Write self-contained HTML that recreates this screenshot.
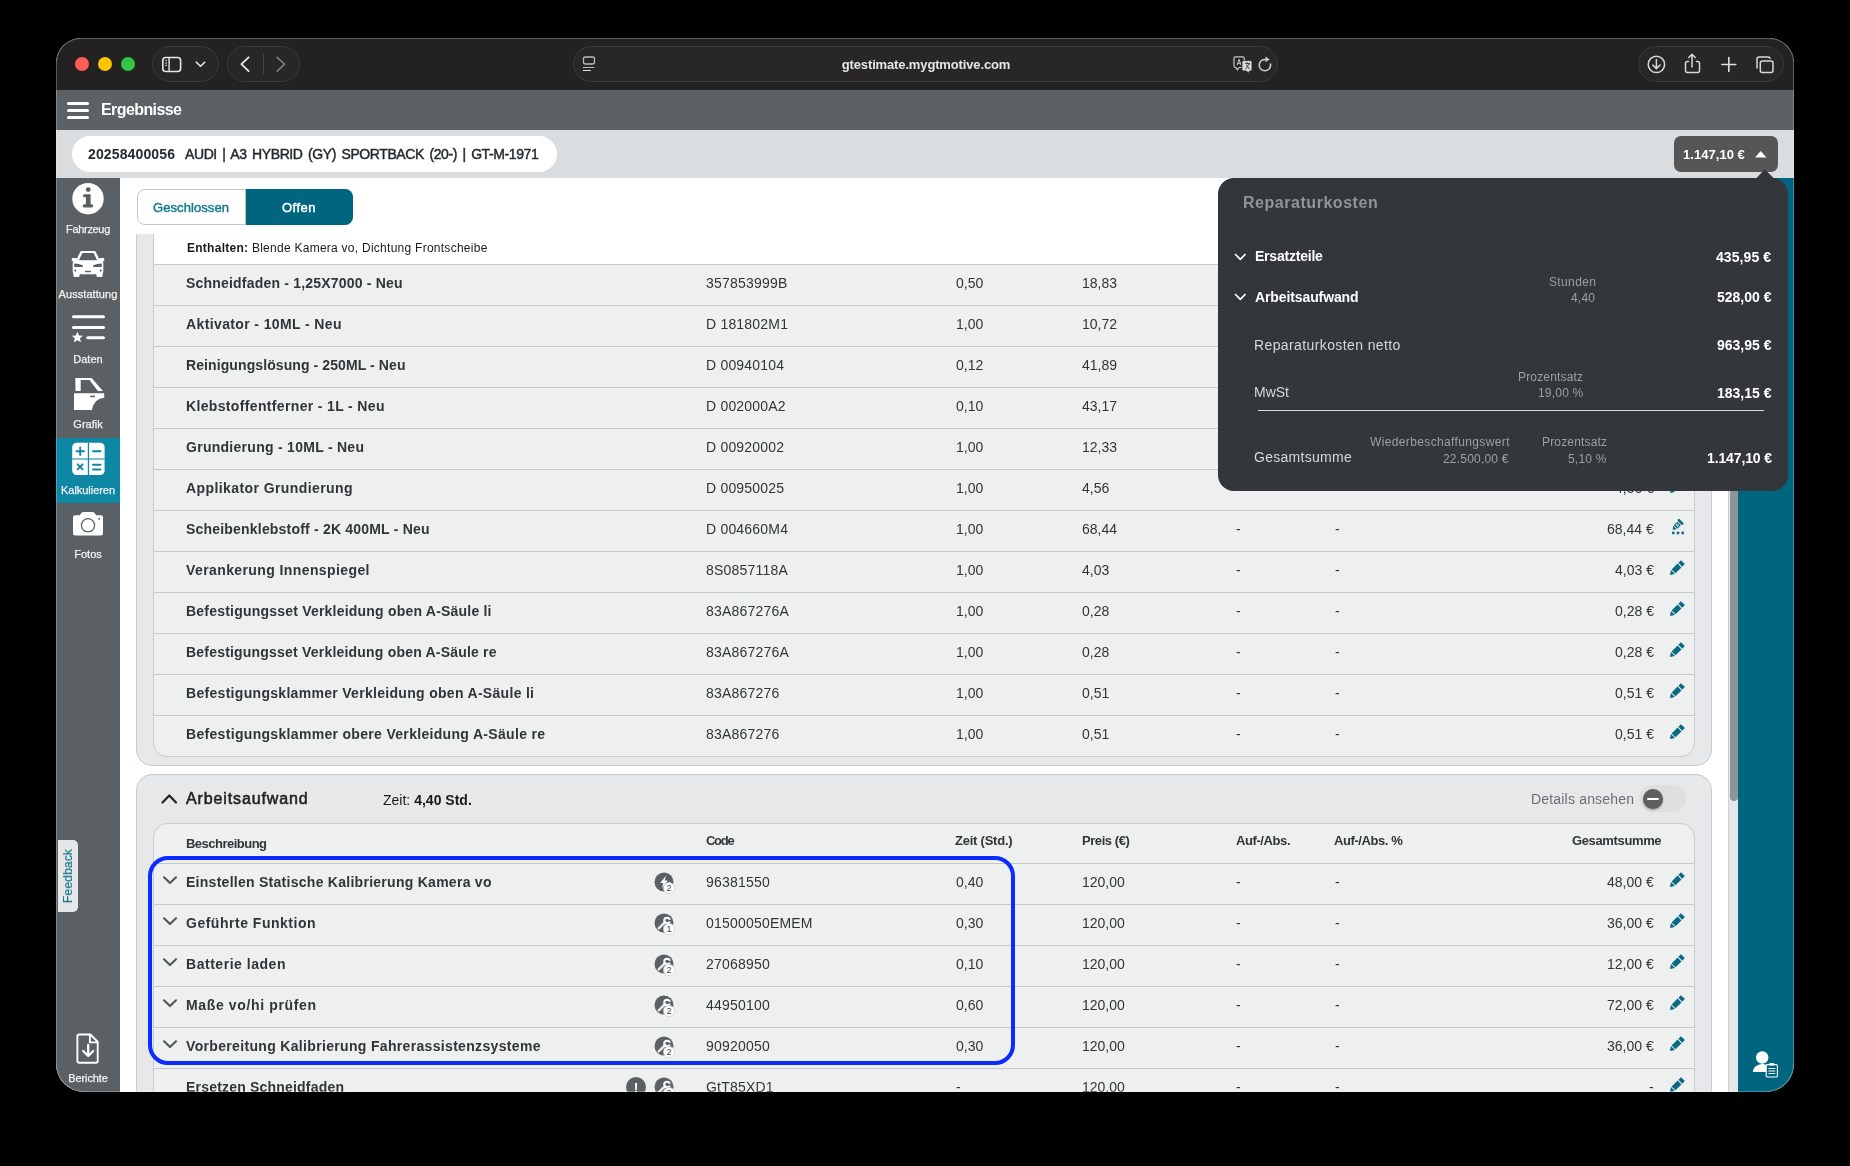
<!DOCTYPE html><html><head><meta charset="utf-8"><style>
html,body{margin:0;padding:0;}
body{width:1850px;height:1166px;background:#000;position:relative;overflow:hidden;font-family:"Liberation Sans", sans-serif;}
.t{position:absolute;line-height:1;white-space:pre;will-change:transform;}
.r{position:absolute;box-sizing:border-box;}
.win{position:absolute;left:56px;top:38px;width:1738px;height:1054px;border-radius:25px 25px 28px 28px;overflow:hidden;background:#fff;}
.pg{position:absolute;left:-56px;top:-38px;width:1850px;height:1166px;}
svg{position:absolute;overflow:visible;}
</style></head><body>
<div class="win"><div class="pg">
<div class="r" style="left:56px;top:38px;width:1738px;height:52px;background:#232220;"></div>
<div class="r" style="left:75px;top:57px;width:14px;height:14px;background:#ff5c58;border-radius:50%;"></div>
<div class="r" style="left:98px;top:57px;width:14px;height:14px;background:#fcc403;border-radius:50%;"></div>
<div class="r" style="left:121px;top:57px;width:14px;height:14px;background:#33c748;border-radius:50%;"></div>
<div class="r" style="left:152px;top:46px;width:67px;height:36px;border:1px solid #3d3b38;border-radius:18px;background:#282725;"></div>
<div class="r" style="left:227px;top:46px;width:73px;height:36px;border:1px solid #3d3b38;border-radius:18px;background:#282725;"></div>
<div class="r" style="left:573px;top:46px;width:705px;height:36px;border:1px solid #3d3b38;border-radius:18px;background:#282725;"></div>
<div class="r" style="left:1638px;top:46px;width:146px;height:36px;border:1px solid #3d3b38;border-radius:18px;background:#282725;"></div>
<svg style="left:0;top:0" width="1850" height="100">
<rect x="162.8" y="57.5" width="17.8" height="14" rx="3" fill="none" stroke="#e8e8e8" stroke-width="1.6"/>
<line x1="169.1" y1="58" x2="169.1" y2="71" stroke="#d0d0d0" stroke-width="1.6"/>
<path d="M165.3 60.5 h1.6 M165.3 65.4 h1.6" stroke="#d8d8d8" stroke-width="1.1"/><rect x="165.3" y="62" width="1.6" height="2" fill="#9a9a9a"/>
<path d="M196.3 62.2 L200.5 66.3 L204.7 62.2" fill="none" stroke="#e8e8e8" stroke-width="1.6" stroke-linecap="round" stroke-linejoin="round"/>
<path d="M248.6 57.3 L241.4 64.2 L248.6 71.1" fill="none" stroke="#e8e8e8" stroke-width="1.8" stroke-linecap="round" stroke-linejoin="round"/>
<line x1="263.5" y1="54" x2="263.5" y2="74" stroke="#444" stroke-width="1"/>
<path d="M277.2 57.3 L284.6 64.2 L277.2 71.1" fill="none" stroke="#7a7a7a" stroke-width="1.8" stroke-linecap="round" stroke-linejoin="round"/>
<rect x="583.5" y="57" width="11" height="7" rx="1.8" fill="none" stroke="#bdbdbd" stroke-width="1.3"/>
<line x1="583" y1="67.5" x2="594.5" y2="67.5" stroke="#bdbdbd" stroke-width="1.2"/>
<line x1="583" y1="70.5" x2="591" y2="70.5" stroke="#e0e0e0" stroke-width="1.2"/>
<path d="M1235.5 56.8 h7.2 a1.5 1.5 0 0 1 1.5 1.5 v7.7 a1.5 1.5 0 0 1 -1.5 1.5 h-3.6 l-1.8 2.3 l-1.3 -2.3 h-0.5 a1.5 1.5 0 0 1 -1.5 -1.5 v-7.7 a1.5 1.5 0 0 1 1.5 -1.5z" fill="#282725" stroke="#c8c8c8" stroke-width="1.2"/>
<path d="M1237.2 65.2 L1239.1 59.3 L1241 65.2 M1237.8 63.4 h2.6" fill="none" stroke="#c8c8c8" stroke-width="1"/>
<path d="M1243.5 60.6 h7 a1.5 1.5 0 0 1 1.5 1.5 v7.3 a1.5 1.5 0 0 1 -1.5 1.5 h-1 l-1 2.3 l-2.2 -2.3 h-2.8 a1.5 1.5 0 0 1 -1.5 -1.5 v-7.3 a1.5 1.5 0 0 1 1.5 -1.5z" fill="#dadada" stroke="#282725" stroke-width="0.8"/>
<path d="M1245 63.6 h5 M1247.5 62.4 v1.2 M1245.6 69 L1249.2 64 M1246.2 65 L1249.6 69" fill="none" stroke="#3a3a3a" stroke-width="1"/>
<path d="M1270.5 64 A5.7 5.7 0 1 1 1266.4 59.6" fill="none" stroke="#cfcfcf" stroke-width="1.5" stroke-linecap="round"/>
<path d="M1265.6 56.6 L1269.6 59.4 L1265.4 62.2 Z" fill="#cfcfcf"/>
<circle cx="1656.4" cy="64.4" r="8.2" fill="none" stroke="#d8d8d8" stroke-width="1.5"/>
<path d="M1656.4 59.5 v8.8 M1652.8 65 l3.6 3.6 l3.6 -3.6" fill="none" stroke="#d8d8d8" stroke-width="1.5" stroke-linecap="round" stroke-linejoin="round"/>
<path d="M1688.5 61.5 h-1 a2 2 0 0 0 -2 2 v7 a2 2 0 0 0 2 2 h10 a2 2 0 0 0 2 -2 v-7 a2 2 0 0 0 -2 -2 h-1" fill="none" stroke="#d8d8d8" stroke-width="1.5" stroke-linecap="round"/>
<path d="M1692 67 v-12.5 M1688.8 57.5 l3.2 -3.2 l3.2 3.2" fill="none" stroke="#d8d8d8" stroke-width="1.5" stroke-linecap="round" stroke-linejoin="round"/>
<path d="M1728.8 57.5 v14 M1721.8 64.5 h14" stroke="#e0e0e0" stroke-width="1.6" stroke-linecap="round"/>
<rect x="1760.3" y="61" width="12.7" height="11.6" rx="2" fill="none" stroke="#d8d8d8" stroke-width="1.5"/>
<path d="M1757 68.5 v-9.5 a2 2 0 0 1 2 -2 h9 a2 2 0 0 1 2 2" fill="none" stroke="#d8d8d8" stroke-width="1.5"/>
</svg>
<div class="t" style="left:626px;width:600px;text-align:center;top:58.00px;font-size:13px;font-weight:bold;color:#e6e6e6;letter-spacing:-0.139px;">gtestimate.mygtmotive.com</div>
<div class="r" style="left:56px;top:90px;width:1738px;height:40px;background:#5c6165;"></div>
<div class="r" style="left:67px;top:101.5px;width:22px;height:3px;background:#fff;border-radius:1.5px;"></div>
<div class="r" style="left:67px;top:108.5px;width:22px;height:3px;background:#fff;border-radius:1.5px;"></div>
<div class="r" style="left:67px;top:115.5px;width:22px;height:3px;background:#fff;border-radius:1.5px;"></div>
<div class="t" style="left:100.5px;top:102.46px;font-size:16px;font-weight:bold;color:#fff;letter-spacing:-0.585px;">Ergebnisse</div>
<div class="r" style="left:56px;top:130px;width:1738px;height:48px;background:#d9dde0;"></div>
<div class="r" style="left:72px;top:136px;width:485px;height:36px;background:#fff;border-radius:18px;"></div>
<div class="t" style="left:88.4px;top:146.75px;font-size:14px;font-weight:bold;color:#262b30;letter-spacing:0.134px;">20258400056</div>
<div class="t" style="left:184.7px;top:146.75px;font-size:14px;font-weight:normal;color:#262b30;-webkit-text-stroke:0.45px #262b30;word-spacing:2px;letter-spacing:-0.404px;">AUDI | A3 HYBRID (GY) SPORTBACK (20-) | GT-M-1971</div>
<div class="r" style="left:1674px;top:136px;width:104px;height:36px;background:#565656;border-radius:7px;"></div>
<div class="t" style="left:1683px;top:148.00px;font-size:13px;font-weight:bold;color:#fff;letter-spacing:0.039px;">1.147,10 €</div>
<svg style="left:0;top:0" width="1850" height="200"><path d="M1755 157.5 L1760.7 151 L1766.4 157.5 Z" fill="#fff"/></svg>
<div class="r" style="left:56px;top:178px;width:64px;height:914px;background:#5b6064;"></div>
<div class="r" style="left:56px;top:438px;width:64px;height:65px;background:#0e87a5;"></div>
<div class="r" style="left:120px;top:178px;width:1618px;height:914px;background:#fff;"></div>
<div class="r" style="left:1738px;top:178px;width:56px;height:914px;background:#006680;"></div>
<div class="r" style="left:1728px;top:178px;width:10px;height:914px;background:#e4e6e8;border-left:1px solid #c9ced2;"></div>
<div class="r" style="left:1730px;top:178px;width:8px;height:623px;background:#8e949a;border-radius:0 0 4px 4px;"></div>
<div class="r" style="left:137px;top:189px;width:216px;height:36px;border:1px solid #c3cace;border-radius:8px;background:#fff;"></div>
<div class="r" style="left:245px;top:189px;width:108px;height:36px;background:#006680;border-radius:0 8px 8px 0;border-left:1px solid #b9c2c7;"></div>
<div class="t" style="left:152.8px;top:201.00px;font-size:13px;font-weight:normal;color:#167b94;-webkit-text-stroke:0.45px #167b94;letter-spacing:0.084px;">Geschlossen</div>
<div class="t" style="left:-1.5px;width:600px;text-align:center;top:201.00px;font-size:13px;font-weight:normal;color:#fff;-webkit-text-stroke:0.45px #fff;letter-spacing:0.534px;">Offen</div>
<div style="position:absolute;left:0;top:234px;width:1850px;height:858px;overflow:hidden;">
<div style="position:absolute;left:0;top:-234px;width:1850px;height:1166px;">
<div class="r" style="left:136px;top:100px;width:1576px;height:666px;background:#e6e8ea;border:1px solid #c6ccd1;border-radius:16px;"></div>
<div class="r" style="left:153px;top:120px;width:1542px;height:637px;background:#eef0ef;border:1px solid #c6ccd1;border-radius:14px;"></div>
<div class="r" style="left:154px;top:200px;width:1540px;height:64px;background:#fff;"></div>
</div></div>
<div class="t" style="left:186.5px;top:242.34px;font-size:12px;font-weight:normal;color:#1a1a1a;letter-spacing:0.262px;"><b>Enthalten:</b> Blende Kamera vo, Dichtung Frontscheibe</div>
<div class="r" style="left:154px;top:264px;width:1540px;height:1px;background:#c3c9cd;"></div>
<div class="t" style="left:186px;top:276.15px;font-size:14px;font-weight:bold;color:#30353a;letter-spacing:0.195px;">Schneidfaden - 1,25X7000 - Neu</div>
<div class="t" style="left:706px;top:276.15px;font-size:14px;font-weight:normal;color:#30353a;letter-spacing:0.2px;">357853999B</div>
<div class="t" style="left:956px;top:276.15px;font-size:14px;font-weight:normal;color:#30353a;">0,50</div>
<div class="t" style="left:1082px;top:276.15px;font-size:14px;font-weight:normal;color:#30353a;">18,83</div>
<div class="t" style="left:1236px;top:276.15px;font-size:14px;font-weight:normal;color:#30353a;">-</div>
<div class="t" style="left:1335px;top:276.15px;font-size:14px;font-weight:normal;color:#30353a;">-</div>
<div class="t" style="right:196px;text-align:right;top:276.15px;font-size:14px;font-weight:normal;color:#30353a;">9,42 €</div>
<svg style="left:1669px;top:273.5px" width="15" height="15" viewBox="0 0 15 15"><path d="M0.90 14.10 L2.00 9.11 L5.89 13.00 Z M2.63 8.48 L8.57 2.54 L12.46 6.43 L6.52 12.37 Z M9.35 1.76 L11.97 -0.86 L15.86 3.03 L13.24 5.65 Z" fill="#0b6a83"/></svg>
<div class="r" style="left:154px;top:305px;width:1540px;height:1px;background:#c3c9cd;"></div>
<div class="t" style="left:186px;top:317.15px;font-size:14px;font-weight:bold;color:#30353a;letter-spacing:0.379px;">Aktivator - 10ML - Neu</div>
<div class="t" style="left:706px;top:317.15px;font-size:14px;font-weight:normal;color:#30353a;letter-spacing:0.2px;">D 181802M1</div>
<div class="t" style="left:956px;top:317.15px;font-size:14px;font-weight:normal;color:#30353a;">1,00</div>
<div class="t" style="left:1082px;top:317.15px;font-size:14px;font-weight:normal;color:#30353a;">10,72</div>
<div class="t" style="left:1236px;top:317.15px;font-size:14px;font-weight:normal;color:#30353a;">-</div>
<div class="t" style="left:1335px;top:317.15px;font-size:14px;font-weight:normal;color:#30353a;">-</div>
<div class="t" style="right:196px;text-align:right;top:317.15px;font-size:14px;font-weight:normal;color:#30353a;">10,72 €</div>
<svg style="left:1669px;top:314.5px" width="15" height="15" viewBox="0 0 15 15"><path d="M0.90 14.10 L2.00 9.11 L5.89 13.00 Z M2.63 8.48 L8.57 2.54 L12.46 6.43 L6.52 12.37 Z M9.35 1.76 L11.97 -0.86 L15.86 3.03 L13.24 5.65 Z" fill="#0b6a83"/></svg>
<div class="r" style="left:154px;top:346px;width:1540px;height:1px;background:#c3c9cd;"></div>
<div class="t" style="left:186px;top:358.15px;font-size:14px;font-weight:bold;color:#30353a;letter-spacing:0.094px;">Reinigungslösung - 250ML - Neu</div>
<div class="t" style="left:706px;top:358.15px;font-size:14px;font-weight:normal;color:#30353a;letter-spacing:0.2px;">D 00940104</div>
<div class="t" style="left:956px;top:358.15px;font-size:14px;font-weight:normal;color:#30353a;">0,12</div>
<div class="t" style="left:1082px;top:358.15px;font-size:14px;font-weight:normal;color:#30353a;">41,89</div>
<div class="t" style="left:1236px;top:358.15px;font-size:14px;font-weight:normal;color:#30353a;">-</div>
<div class="t" style="left:1335px;top:358.15px;font-size:14px;font-weight:normal;color:#30353a;">-</div>
<div class="t" style="right:196px;text-align:right;top:358.15px;font-size:14px;font-weight:normal;color:#30353a;">5,03 €</div>
<svg style="left:1669px;top:355.5px" width="15" height="15" viewBox="0 0 15 15"><path d="M0.90 14.10 L2.00 9.11 L5.89 13.00 Z M2.63 8.48 L8.57 2.54 L12.46 6.43 L6.52 12.37 Z M9.35 1.76 L11.97 -0.86 L15.86 3.03 L13.24 5.65 Z" fill="#0b6a83"/></svg>
<div class="r" style="left:154px;top:387px;width:1540px;height:1px;background:#c3c9cd;"></div>
<div class="t" style="left:186px;top:399.15px;font-size:14px;font-weight:bold;color:#30353a;letter-spacing:0.348px;">Klebstoffentferner - 1L - Neu</div>
<div class="t" style="left:706px;top:399.15px;font-size:14px;font-weight:normal;color:#30353a;letter-spacing:0.2px;">D 002000A2</div>
<div class="t" style="left:956px;top:399.15px;font-size:14px;font-weight:normal;color:#30353a;">0,10</div>
<div class="t" style="left:1082px;top:399.15px;font-size:14px;font-weight:normal;color:#30353a;">43,17</div>
<div class="t" style="left:1236px;top:399.15px;font-size:14px;font-weight:normal;color:#30353a;">-</div>
<div class="t" style="left:1335px;top:399.15px;font-size:14px;font-weight:normal;color:#30353a;">-</div>
<div class="t" style="right:196px;text-align:right;top:399.15px;font-size:14px;font-weight:normal;color:#30353a;">4,32 €</div>
<svg style="left:1669px;top:396.5px" width="15" height="15" viewBox="0 0 15 15"><path d="M0.90 14.10 L2.00 9.11 L5.89 13.00 Z M2.63 8.48 L8.57 2.54 L12.46 6.43 L6.52 12.37 Z M9.35 1.76 L11.97 -0.86 L15.86 3.03 L13.24 5.65 Z" fill="#0b6a83"/></svg>
<div class="r" style="left:154px;top:428px;width:1540px;height:1px;background:#c3c9cd;"></div>
<div class="t" style="left:186px;top:440.15px;font-size:14px;font-weight:bold;color:#30353a;letter-spacing:0.276px;">Grundierung - 10ML - Neu</div>
<div class="t" style="left:706px;top:440.15px;font-size:14px;font-weight:normal;color:#30353a;letter-spacing:0.2px;">D 00920002</div>
<div class="t" style="left:956px;top:440.15px;font-size:14px;font-weight:normal;color:#30353a;">1,00</div>
<div class="t" style="left:1082px;top:440.15px;font-size:14px;font-weight:normal;color:#30353a;">12,33</div>
<div class="t" style="left:1236px;top:440.15px;font-size:14px;font-weight:normal;color:#30353a;">-</div>
<div class="t" style="left:1335px;top:440.15px;font-size:14px;font-weight:normal;color:#30353a;">-</div>
<div class="t" style="right:196px;text-align:right;top:440.15px;font-size:14px;font-weight:normal;color:#30353a;">12,33 €</div>
<svg style="left:1669px;top:437.5px" width="15" height="15" viewBox="0 0 15 15"><path d="M0.90 14.10 L2.00 9.11 L5.89 13.00 Z M2.63 8.48 L8.57 2.54 L12.46 6.43 L6.52 12.37 Z M9.35 1.76 L11.97 -0.86 L15.86 3.03 L13.24 5.65 Z" fill="#0b6a83"/></svg>
<div class="r" style="left:154px;top:469px;width:1540px;height:1px;background:#c3c9cd;"></div>
<div class="t" style="left:186px;top:481.15px;font-size:14px;font-weight:bold;color:#30353a;letter-spacing:0.410px;">Applikator Grundierung</div>
<div class="t" style="left:706px;top:481.15px;font-size:14px;font-weight:normal;color:#30353a;letter-spacing:0.2px;">D 00950025</div>
<div class="t" style="left:956px;top:481.15px;font-size:14px;font-weight:normal;color:#30353a;">1,00</div>
<div class="t" style="left:1082px;top:481.15px;font-size:14px;font-weight:normal;color:#30353a;">4,56</div>
<div class="t" style="left:1236px;top:481.15px;font-size:14px;font-weight:normal;color:#30353a;">-</div>
<div class="t" style="left:1335px;top:481.15px;font-size:14px;font-weight:normal;color:#30353a;">-</div>
<div class="t" style="right:196px;text-align:right;top:481.15px;font-size:14px;font-weight:normal;color:#30353a;">4,56 €</div>
<svg style="left:1669px;top:478.5px" width="15" height="15" viewBox="0 0 15 15"><path d="M0.90 14.10 L2.00 9.11 L5.89 13.00 Z M2.63 8.48 L8.57 2.54 L12.46 6.43 L6.52 12.37 Z M9.35 1.76 L11.97 -0.86 L15.86 3.03 L13.24 5.65 Z" fill="#0b6a83"/></svg>
<div class="r" style="left:154px;top:510px;width:1540px;height:1px;background:#c3c9cd;"></div>
<div class="t" style="left:186px;top:522.15px;font-size:14px;font-weight:bold;color:#30353a;letter-spacing:0.196px;">Scheibenklebstoff - 2K 400ML - Neu</div>
<div class="t" style="left:706px;top:522.15px;font-size:14px;font-weight:normal;color:#30353a;letter-spacing:0.2px;">D 004660M4</div>
<div class="t" style="left:956px;top:522.15px;font-size:14px;font-weight:normal;color:#30353a;">1,00</div>
<div class="t" style="left:1082px;top:522.15px;font-size:14px;font-weight:normal;color:#30353a;">68,44</div>
<div class="t" style="left:1236px;top:522.15px;font-size:14px;font-weight:normal;color:#30353a;">-</div>
<div class="t" style="left:1335px;top:522.15px;font-size:14px;font-weight:normal;color:#30353a;">-</div>
<div class="t" style="right:196px;text-align:right;top:522.15px;font-size:14px;font-weight:normal;color:#30353a;">68,44 €</div>
<svg style="left:0;top:0" width="1850" height="600"><path d="M1672.70 529.80 L1673.16 525.73 L1676.77 529.34ZM1673.73 525.17 L1677.26 521.63 L1680.87 525.24 L1677.33 528.77ZM1675.42 525.03 L1676.16 525.77 L1677.93 524.00 L1677.19 523.26ZM1676.73 526.34 L1677.47 527.08 L1679.24 525.31 L1678.50 524.57Z" fill="#0b6a83" fill-rule="evenodd"/><path d="M1678.85 520.25 L1682.25 523.65" stroke="#0b6a83" stroke-width="2.6" stroke-linecap="round"/><circle cx="1673.3" cy="533" r="1.45" fill="#0b6a83"/><circle cx="1678" cy="533" r="1.45" fill="#0b6a83"/><circle cx="1682.7" cy="533" r="1.45" fill="#0b6a83"/></svg>
<div class="r" style="left:154px;top:551px;width:1540px;height:1px;background:#c3c9cd;"></div>
<div class="t" style="left:186px;top:563.15px;font-size:14px;font-weight:bold;color:#30353a;letter-spacing:0.401px;">Verankerung Innenspiegel</div>
<div class="t" style="left:706px;top:563.15px;font-size:14px;font-weight:normal;color:#30353a;letter-spacing:0.2px;">8S0857118A</div>
<div class="t" style="left:956px;top:563.15px;font-size:14px;font-weight:normal;color:#30353a;">1,00</div>
<div class="t" style="left:1082px;top:563.15px;font-size:14px;font-weight:normal;color:#30353a;">4,03</div>
<div class="t" style="left:1236px;top:563.15px;font-size:14px;font-weight:normal;color:#30353a;">-</div>
<div class="t" style="left:1335px;top:563.15px;font-size:14px;font-weight:normal;color:#30353a;">-</div>
<div class="t" style="right:196px;text-align:right;top:563.15px;font-size:14px;font-weight:normal;color:#30353a;">4,03 €</div>
<svg style="left:1669px;top:560.5px" width="15" height="15" viewBox="0 0 15 15"><path d="M0.90 14.10 L2.00 9.11 L5.89 13.00 Z M2.63 8.48 L8.57 2.54 L12.46 6.43 L6.52 12.37 Z M9.35 1.76 L11.97 -0.86 L15.86 3.03 L13.24 5.65 Z" fill="#0b6a83"/></svg>
<div class="r" style="left:154px;top:592px;width:1540px;height:1px;background:#c3c9cd;"></div>
<div class="t" style="left:186px;top:604.15px;font-size:14px;font-weight:bold;color:#30353a;letter-spacing:0.211px;">Befestigungsset Verkleidung oben A-Säule li</div>
<div class="t" style="left:706px;top:604.15px;font-size:14px;font-weight:normal;color:#30353a;letter-spacing:0.2px;">83A867276A</div>
<div class="t" style="left:956px;top:604.15px;font-size:14px;font-weight:normal;color:#30353a;">1,00</div>
<div class="t" style="left:1082px;top:604.15px;font-size:14px;font-weight:normal;color:#30353a;">0,28</div>
<div class="t" style="left:1236px;top:604.15px;font-size:14px;font-weight:normal;color:#30353a;">-</div>
<div class="t" style="left:1335px;top:604.15px;font-size:14px;font-weight:normal;color:#30353a;">-</div>
<div class="t" style="right:196px;text-align:right;top:604.15px;font-size:14px;font-weight:normal;color:#30353a;">0,28 €</div>
<svg style="left:1669px;top:601.5px" width="15" height="15" viewBox="0 0 15 15"><path d="M0.90 14.10 L2.00 9.11 L5.89 13.00 Z M2.63 8.48 L8.57 2.54 L12.46 6.43 L6.52 12.37 Z M9.35 1.76 L11.97 -0.86 L15.86 3.03 L13.24 5.65 Z" fill="#0b6a83"/></svg>
<div class="r" style="left:154px;top:633px;width:1540px;height:1px;background:#c3c9cd;"></div>
<div class="t" style="left:186px;top:645.15px;font-size:14px;font-weight:bold;color:#30353a;letter-spacing:0.2px;">Befestigungsset Verkleidung oben A-Säule re</div>
<div class="t" style="left:706px;top:645.15px;font-size:14px;font-weight:normal;color:#30353a;letter-spacing:0.2px;">83A867276A</div>
<div class="t" style="left:956px;top:645.15px;font-size:14px;font-weight:normal;color:#30353a;">1,00</div>
<div class="t" style="left:1082px;top:645.15px;font-size:14px;font-weight:normal;color:#30353a;">0,28</div>
<div class="t" style="left:1236px;top:645.15px;font-size:14px;font-weight:normal;color:#30353a;">-</div>
<div class="t" style="left:1335px;top:645.15px;font-size:14px;font-weight:normal;color:#30353a;">-</div>
<div class="t" style="right:196px;text-align:right;top:645.15px;font-size:14px;font-weight:normal;color:#30353a;">0,28 €</div>
<svg style="left:1669px;top:642.5px" width="15" height="15" viewBox="0 0 15 15"><path d="M0.90 14.10 L2.00 9.11 L5.89 13.00 Z M2.63 8.48 L8.57 2.54 L12.46 6.43 L6.52 12.37 Z M9.35 1.76 L11.97 -0.86 L15.86 3.03 L13.24 5.65 Z" fill="#0b6a83"/></svg>
<div class="r" style="left:154px;top:674px;width:1540px;height:1px;background:#c3c9cd;"></div>
<div class="t" style="left:186px;top:686.15px;font-size:14px;font-weight:bold;color:#30353a;letter-spacing:0.304px;">Befestigungsklammer Verkleidung oben A-Säule li</div>
<div class="t" style="left:706px;top:686.15px;font-size:14px;font-weight:normal;color:#30353a;letter-spacing:0.2px;">83A867276</div>
<div class="t" style="left:956px;top:686.15px;font-size:14px;font-weight:normal;color:#30353a;">1,00</div>
<div class="t" style="left:1082px;top:686.15px;font-size:14px;font-weight:normal;color:#30353a;">0,51</div>
<div class="t" style="left:1236px;top:686.15px;font-size:14px;font-weight:normal;color:#30353a;">-</div>
<div class="t" style="left:1335px;top:686.15px;font-size:14px;font-weight:normal;color:#30353a;">-</div>
<div class="t" style="right:196px;text-align:right;top:686.15px;font-size:14px;font-weight:normal;color:#30353a;">0,51 €</div>
<svg style="left:1669px;top:683.5px" width="15" height="15" viewBox="0 0 15 15"><path d="M0.90 14.10 L2.00 9.11 L5.89 13.00 Z M2.63 8.48 L8.57 2.54 L12.46 6.43 L6.52 12.37 Z M9.35 1.76 L11.97 -0.86 L15.86 3.03 L13.24 5.65 Z" fill="#0b6a83"/></svg>
<div class="r" style="left:154px;top:715px;width:1540px;height:1px;background:#c3c9cd;"></div>
<div class="t" style="left:186px;top:727.15px;font-size:14px;font-weight:bold;color:#30353a;letter-spacing:0.316px;">Befestigungsklammer obere Verkleidung A-Säule re</div>
<div class="t" style="left:706px;top:727.15px;font-size:14px;font-weight:normal;color:#30353a;letter-spacing:0.2px;">83A867276</div>
<div class="t" style="left:956px;top:727.15px;font-size:14px;font-weight:normal;color:#30353a;">1,00</div>
<div class="t" style="left:1082px;top:727.15px;font-size:14px;font-weight:normal;color:#30353a;">0,51</div>
<div class="t" style="left:1236px;top:727.15px;font-size:14px;font-weight:normal;color:#30353a;">-</div>
<div class="t" style="left:1335px;top:727.15px;font-size:14px;font-weight:normal;color:#30353a;">-</div>
<div class="t" style="right:196px;text-align:right;top:727.15px;font-size:14px;font-weight:normal;color:#30353a;">0,51 €</div>
<svg style="left:1669px;top:724.5px" width="15" height="15" viewBox="0 0 15 15"><path d="M0.90 14.10 L2.00 9.11 L5.89 13.00 Z M2.63 8.48 L8.57 2.54 L12.46 6.43 L6.52 12.37 Z M9.35 1.76 L11.97 -0.86 L15.86 3.03 L13.24 5.65 Z" fill="#0b6a83"/></svg>
<div class="r" style="left:136px;top:774px;width:1576px;height:400px;background:#e6e8ea;border:1px solid #c6ccd1;border-radius:16px;"></div>
<div class="r" style="left:153px;top:823px;width:1542px;height:400px;background:#eef0ef;border:1px solid #c6ccd1;border-radius:14px;"></div>
<svg style="left:0;top:0" width="200" height="900"><path d="M162.5 802.5 L169.3 795.5 L176 802.5" fill="none" stroke="#222" stroke-width="2.2" stroke-linecap="round" stroke-linejoin="round"/></svg>
<div class="t" style="left:185.5px;top:791.16px;font-size:16px;font-weight:normal;color:#1f1f1f;-webkit-text-stroke:0.55px #1f1f1f;letter-spacing:0.877px;">Arbeitsaufwand</div>
<div class="t" style="left:383.3px;top:792.95px;font-size:14px;font-weight:normal;color:#1a1a1a;letter-spacing:0.006px;">Zeit: <b>4,40 Std.</b></div>
<div class="t" style="right:215.79999999999995px;text-align:right;top:791.85px;font-size:14px;font-weight:normal;color:#6b6f73;letter-spacing:0.185px;margin-right:-0.185px;">Details ansehen</div>
<div class="r" style="left:1639px;top:785px;width:47px;height:27px;background:#dedfe0;border-radius:14px;"></div>
<div class="r" style="left:1643px;top:789px;width:20px;height:20px;background:#5e5e5e;border-radius:50%;box-shadow:0 1px 2px rgba(0,0,0,0.35);"></div>
<div class="r" style="left:1647px;top:797.5px;width:12px;height:2.5px;background:#fff;border-radius:1px;"></div>
<div class="t" style="left:186.4px;top:836.90px;font-size:13px;font-weight:bold;color:#30353a;letter-spacing:-0.517px;">Beschreibung</div>
<div class="t" style="left:706.3px;top:834.00px;font-size:13px;font-weight:bold;color:#30353a;letter-spacing:-1.267px;">Code</div>
<div class="t" style="left:955.1px;top:834.00px;font-size:13px;font-weight:bold;color:#30353a;letter-spacing:-0.234px;">Zeit (Std.)</div>
<div class="t" style="left:1082px;top:834.00px;font-size:13px;font-weight:bold;color:#30353a;letter-spacing:-0.439px;">Preis (€)</div>
<div class="t" style="left:1235.7px;top:834.00px;font-size:13px;font-weight:bold;color:#30353a;letter-spacing:-0.410px;">Auf-/Abs.</div>
<div class="t" style="left:1334px;top:834.00px;font-size:13px;font-weight:bold;color:#30353a;letter-spacing:-0.425px;">Auf-/Abs. %</div>
<div class="t" style="right:188.70000000000005px;text-align:right;top:834.20px;font-size:13px;font-weight:bold;color:#30353a;letter-spacing:-0.362px;margin-right:0.362px;">Gesamtsumme</div>
<div class="r" style="left:154px;top:863px;width:1540px;height:1px;background:#c3c9cd;"></div>
<svg style="left:0;top:0" width="200" height="1100"><path d="M164 877.3 L170 883.1 L176 877.3" fill="none" stroke="#50565b" stroke-width="2.1" stroke-linecap="round" stroke-linejoin="round"/></svg>
<div class="t" style="left:186px;top:875.15px;font-size:14px;font-weight:bold;color:#30353a;letter-spacing:0.271px;">Einstellen Statische Kalibrierung Kamera vo</div>
<svg style="left:652px;top:870px" width="26" height="26" viewBox="-12 -12 26 26"><circle cx="0" cy="0" r="9.5" fill="#5b6064"/><path d="M2.2 -6.5 L-3.8 1 L-0.6 1 L-2.2 6 L3.8 -1.5 L0.6 -1.5 Z" fill="#fff"/><circle cx="5" cy="6" r="5.6" fill="#fff" stroke="#c9cdd0" stroke-width="0.7"/><text x="5" y="9.3" font-family="Liberation Sans" font-size="9" text-anchor="middle" fill="#444">2</text></svg>
<div class="t" style="left:706px;top:875.15px;font-size:14px;font-weight:normal;color:#30353a;letter-spacing:0.2px;">96381550</div>
<div class="t" style="left:956px;top:875.15px;font-size:14px;font-weight:normal;color:#30353a;">0,40</div>
<div class="t" style="left:1082px;top:875.15px;font-size:14px;font-weight:normal;color:#30353a;">120,00</div>
<div class="t" style="left:1236px;top:875.15px;font-size:14px;font-weight:normal;color:#30353a;">-</div>
<div class="t" style="left:1335px;top:875.15px;font-size:14px;font-weight:normal;color:#30353a;">-</div>
<div class="t" style="right:196px;text-align:right;top:875.15px;font-size:14px;font-weight:normal;color:#30353a;">48,00 €</div>
<svg style="left:1669px;top:872.5px" width="15" height="15" viewBox="0 0 15 15"><path d="M0.90 14.10 L2.00 9.11 L5.89 13.00 Z M2.63 8.48 L8.57 2.54 L12.46 6.43 L6.52 12.37 Z M9.35 1.76 L11.97 -0.86 L15.86 3.03 L13.24 5.65 Z" fill="#0b6a83"/></svg>
<div class="r" style="left:154px;top:904px;width:1540px;height:1px;background:#c3c9cd;"></div>
<svg style="left:0;top:0" width="200" height="1100"><path d="M164 918.3 L170 924.1 L176 918.3" fill="none" stroke="#50565b" stroke-width="2.1" stroke-linecap="round" stroke-linejoin="round"/></svg>
<div class="t" style="left:186px;top:916.15px;font-size:14px;font-weight:bold;color:#30353a;letter-spacing:0.511px;">Geführte Funktion</div>
<svg style="left:652px;top:911px" width="26" height="26" viewBox="-12 -12 26 26"><circle cx="0" cy="0" r="9.5" fill="#5b6064"/><path d="M-5.3 5.3 L1.2 -1.0" stroke="#e8e8e8" stroke-width="2.5" stroke-linecap="round"/><circle cx="3.0" cy="-2.5" r="2.75" fill="none" stroke="#fff" stroke-width="2.0"/><path d="M3.2 -3.5 L7 -3.0 L7 -1.4 L3.0 -1.6Z" fill="#5b6064"/><circle cx="5" cy="6" r="5.6" fill="#fff" stroke="#c9cdd0" stroke-width="0.7"/><text x="5" y="9.3" font-family="Liberation Sans" font-size="9" text-anchor="middle" fill="#444">1</text></svg>
<div class="t" style="left:706px;top:916.15px;font-size:14px;font-weight:normal;color:#30353a;letter-spacing:0.2px;">01500050EMEM</div>
<div class="t" style="left:956px;top:916.15px;font-size:14px;font-weight:normal;color:#30353a;">0,30</div>
<div class="t" style="left:1082px;top:916.15px;font-size:14px;font-weight:normal;color:#30353a;">120,00</div>
<div class="t" style="left:1236px;top:916.15px;font-size:14px;font-weight:normal;color:#30353a;">-</div>
<div class="t" style="left:1335px;top:916.15px;font-size:14px;font-weight:normal;color:#30353a;">-</div>
<div class="t" style="right:196px;text-align:right;top:916.15px;font-size:14px;font-weight:normal;color:#30353a;">36,00 €</div>
<svg style="left:1669px;top:913.5px" width="15" height="15" viewBox="0 0 15 15"><path d="M0.90 14.10 L2.00 9.11 L5.89 13.00 Z M2.63 8.48 L8.57 2.54 L12.46 6.43 L6.52 12.37 Z M9.35 1.76 L11.97 -0.86 L15.86 3.03 L13.24 5.65 Z" fill="#0b6a83"/></svg>
<div class="r" style="left:154px;top:945px;width:1540px;height:1px;background:#c3c9cd;"></div>
<svg style="left:0;top:0" width="200" height="1100"><path d="M164 959.3 L170 965.1 L176 959.3" fill="none" stroke="#50565b" stroke-width="2.1" stroke-linecap="round" stroke-linejoin="round"/></svg>
<div class="t" style="left:186px;top:957.15px;font-size:14px;font-weight:bold;color:#30353a;letter-spacing:0.531px;">Batterie laden</div>
<svg style="left:652px;top:952px" width="26" height="26" viewBox="-12 -12 26 26"><circle cx="0" cy="0" r="9.5" fill="#5b6064"/><path d="M-5.3 5.3 L1.2 -1.0" stroke="#e8e8e8" stroke-width="2.5" stroke-linecap="round"/><circle cx="3.0" cy="-2.5" r="2.75" fill="none" stroke="#fff" stroke-width="2.0"/><path d="M3.2 -3.5 L7 -3.0 L7 -1.4 L3.0 -1.6Z" fill="#5b6064"/><circle cx="5" cy="6" r="5.6" fill="#fff" stroke="#c9cdd0" stroke-width="0.7"/><text x="5" y="9.3" font-family="Liberation Sans" font-size="9" text-anchor="middle" fill="#444">2</text></svg>
<div class="t" style="left:706px;top:957.15px;font-size:14px;font-weight:normal;color:#30353a;letter-spacing:0.2px;">27068950</div>
<div class="t" style="left:956px;top:957.15px;font-size:14px;font-weight:normal;color:#30353a;">0,10</div>
<div class="t" style="left:1082px;top:957.15px;font-size:14px;font-weight:normal;color:#30353a;">120,00</div>
<div class="t" style="left:1236px;top:957.15px;font-size:14px;font-weight:normal;color:#30353a;">-</div>
<div class="t" style="left:1335px;top:957.15px;font-size:14px;font-weight:normal;color:#30353a;">-</div>
<div class="t" style="right:196px;text-align:right;top:957.15px;font-size:14px;font-weight:normal;color:#30353a;">12,00 €</div>
<svg style="left:1669px;top:954.5px" width="15" height="15" viewBox="0 0 15 15"><path d="M0.90 14.10 L2.00 9.11 L5.89 13.00 Z M2.63 8.48 L8.57 2.54 L12.46 6.43 L6.52 12.37 Z M9.35 1.76 L11.97 -0.86 L15.86 3.03 L13.24 5.65 Z" fill="#0b6a83"/></svg>
<div class="r" style="left:154px;top:986px;width:1540px;height:1px;background:#c3c9cd;"></div>
<svg style="left:0;top:0" width="200" height="1100"><path d="M164 1000.3 L170 1006.1 L176 1000.3" fill="none" stroke="#50565b" stroke-width="2.1" stroke-linecap="round" stroke-linejoin="round"/></svg>
<div class="t" style="left:186px;top:998.15px;font-size:14px;font-weight:bold;color:#30353a;letter-spacing:0.638px;">Maße vo/hi prüfen</div>
<svg style="left:652px;top:993px" width="26" height="26" viewBox="-12 -12 26 26"><circle cx="0" cy="0" r="9.5" fill="#5b6064"/><path d="M-5.3 5.3 L1.2 -1.0" stroke="#e8e8e8" stroke-width="2.5" stroke-linecap="round"/><circle cx="3.0" cy="-2.5" r="2.75" fill="none" stroke="#fff" stroke-width="2.0"/><path d="M3.2 -3.5 L7 -3.0 L7 -1.4 L3.0 -1.6Z" fill="#5b6064"/><circle cx="5" cy="6" r="5.6" fill="#fff" stroke="#c9cdd0" stroke-width="0.7"/><text x="5" y="9.3" font-family="Liberation Sans" font-size="9" text-anchor="middle" fill="#444">2</text></svg>
<div class="t" style="left:706px;top:998.15px;font-size:14px;font-weight:normal;color:#30353a;letter-spacing:0.2px;">44950100</div>
<div class="t" style="left:956px;top:998.15px;font-size:14px;font-weight:normal;color:#30353a;">0,60</div>
<div class="t" style="left:1082px;top:998.15px;font-size:14px;font-weight:normal;color:#30353a;">120,00</div>
<div class="t" style="left:1236px;top:998.15px;font-size:14px;font-weight:normal;color:#30353a;">-</div>
<div class="t" style="left:1335px;top:998.15px;font-size:14px;font-weight:normal;color:#30353a;">-</div>
<div class="t" style="right:196px;text-align:right;top:998.15px;font-size:14px;font-weight:normal;color:#30353a;">72,00 €</div>
<svg style="left:1669px;top:995.5px" width="15" height="15" viewBox="0 0 15 15"><path d="M0.90 14.10 L2.00 9.11 L5.89 13.00 Z M2.63 8.48 L8.57 2.54 L12.46 6.43 L6.52 12.37 Z M9.35 1.76 L11.97 -0.86 L15.86 3.03 L13.24 5.65 Z" fill="#0b6a83"/></svg>
<div class="r" style="left:154px;top:1027px;width:1540px;height:1px;background:#c3c9cd;"></div>
<svg style="left:0;top:0" width="200" height="1100"><path d="M164 1041.3 L170 1047.1 L176 1041.3" fill="none" stroke="#50565b" stroke-width="2.1" stroke-linecap="round" stroke-linejoin="round"/></svg>
<div class="t" style="left:186px;top:1039.15px;font-size:14px;font-weight:bold;color:#30353a;letter-spacing:0.330px;">Vorbereitung Kalibrierung Fahrerassistenzsysteme</div>
<svg style="left:652px;top:1034px" width="26" height="26" viewBox="-12 -12 26 26"><circle cx="0" cy="0" r="9.5" fill="#5b6064"/><path d="M-5.3 5.3 L1.2 -1.0" stroke="#e8e8e8" stroke-width="2.5" stroke-linecap="round"/><circle cx="3.0" cy="-2.5" r="2.75" fill="none" stroke="#fff" stroke-width="2.0"/><path d="M3.2 -3.5 L7 -3.0 L7 -1.4 L3.0 -1.6Z" fill="#5b6064"/><circle cx="5" cy="6" r="5.6" fill="#fff" stroke="#c9cdd0" stroke-width="0.7"/><text x="5" y="9.3" font-family="Liberation Sans" font-size="9" text-anchor="middle" fill="#444">2</text></svg>
<div class="t" style="left:706px;top:1039.15px;font-size:14px;font-weight:normal;color:#30353a;letter-spacing:0.2px;">90920050</div>
<div class="t" style="left:956px;top:1039.15px;font-size:14px;font-weight:normal;color:#30353a;">0,30</div>
<div class="t" style="left:1082px;top:1039.15px;font-size:14px;font-weight:normal;color:#30353a;">120,00</div>
<div class="t" style="left:1236px;top:1039.15px;font-size:14px;font-weight:normal;color:#30353a;">-</div>
<div class="t" style="left:1335px;top:1039.15px;font-size:14px;font-weight:normal;color:#30353a;">-</div>
<div class="t" style="right:196px;text-align:right;top:1039.15px;font-size:14px;font-weight:normal;color:#30353a;">36,00 €</div>
<svg style="left:1669px;top:1036.5px" width="15" height="15" viewBox="0 0 15 15"><path d="M0.90 14.10 L2.00 9.11 L5.89 13.00 Z M2.63 8.48 L8.57 2.54 L12.46 6.43 L6.52 12.37 Z M9.35 1.76 L11.97 -0.86 L15.86 3.03 L13.24 5.65 Z" fill="#0b6a83"/></svg>
<div class="r" style="left:154px;top:1068px;width:1540px;height:1px;background:#c3c9cd;"></div>
<div class="t" style="left:186px;top:1080.15px;font-size:14px;font-weight:bold;color:#30353a;letter-spacing:0.198px;">Ersetzen Schneidfaden</div>
<svg style="left:652px;top:1075px" width="26" height="26" viewBox="-12 -12 26 26"><circle cx="0" cy="0" r="9.5" fill="#5b6064"/><path d="M-5.3 5.3 L1.2 -1.0" stroke="#e8e8e8" stroke-width="2.5" stroke-linecap="round"/><circle cx="3.0" cy="-2.5" r="2.75" fill="none" stroke="#fff" stroke-width="2.0"/><path d="M3.2 -3.5 L7 -3.0 L7 -1.4 L3.0 -1.6Z" fill="#5b6064"/><circle cx="5" cy="6" r="5.6" fill="#fff" stroke="#c9cdd0" stroke-width="0.7"/><text x="5" y="9.3" font-family="Liberation Sans" font-size="9" text-anchor="middle" fill="#444">2</text></svg>
<div class="r" style="left:626px;top:1077px;width:20px;height:20px;background:#5b6064;border-radius:50%;"></div>
<div class="t" style="left:336px;width:600px;text-align:center;top:1081.15px;font-size:14px;font-weight:bold;color:#fff;">!</div>
<div class="t" style="left:706px;top:1080.15px;font-size:14px;font-weight:normal;color:#30353a;letter-spacing:0.2px;">GtT85XD1</div>
<div class="t" style="left:956px;top:1080.15px;font-size:14px;font-weight:normal;color:#30353a;">-</div>
<div class="t" style="left:1082px;top:1080.15px;font-size:14px;font-weight:normal;color:#30353a;">120,00</div>
<div class="t" style="left:1236px;top:1080.15px;font-size:14px;font-weight:normal;color:#30353a;">-</div>
<div class="t" style="left:1335px;top:1080.15px;font-size:14px;font-weight:normal;color:#30353a;">-</div>
<div class="t" style="right:196px;text-align:right;top:1080.15px;font-size:14px;font-weight:normal;color:#30353a;">-</div>
<svg style="left:1669px;top:1077.5px" width="15" height="15" viewBox="0 0 15 15"><path d="M0.90 14.10 L2.00 9.11 L5.89 13.00 Z M2.63 8.48 L8.57 2.54 L12.46 6.43 L6.52 12.37 Z M9.35 1.76 L11.97 -0.86 L15.86 3.03 L13.24 5.65 Z" fill="#0b6a83"/></svg>
<div class="r" style="left:148px;top:856px;width:867px;height:209px;border:4px solid #0a2cff;border-radius:20px;"></div>
<svg style="left:0;top:0" width="130" height="1100">
<circle cx="88" cy="198.7" r="15.7" fill="#fff"/>
<circle cx="88.2" cy="189.6" r="2.4" fill="#5b6064"/>
<path d="M84.6 194.2 h6 v10.1 h1 a1.55 1.55 0 0 1 0 3.1 h-7.4 a1.55 1.55 0 0 1 0 -3.1 h1.7 v-7 h-1.3 a1.55 1.55 0 0 1 0 -3.1z" fill="#5b6064"/>
<path d="M81.6 251 h12.8 a1.6 1.6 0 0 1 1.45 0.95 l4.3 9 h-24.3 l4.3 -9 a1.6 1.6 0 0 1 1.45 -0.95z" fill="#fff"/>
<path d="M82.4 253.1 h11.2 l3.7 7.6 h-18.6 z" fill="#5b6064"/>
<rect x="71.6" y="258" width="5.2" height="3.2" rx="1.4" fill="#fff"/>
<rect x="99.2" y="258" width="5.2" height="3.2" rx="1.4" fill="#fff"/>
<rect x="72.7" y="260.3" width="30.6" height="13.9" rx="2.6" fill="#fff"/>
<rect x="73.4" y="271" width="6.2" height="6" rx="1.6" fill="#fff"/>
<rect x="96.4" y="271" width="6.2" height="6" rx="1.6" fill="#fff"/>
<path d="M74.2 263.6 q4.8 0 8.6 1.6 v1.7 h-8.6 z M101.8 263.6 q-4.8 0 -8.6 1.6 v1.7 h8.6 z" fill="#5b6064"/>
<circle cx="75.3" cy="270.6" r="1.05" fill="#5b6064"/><circle cx="100.7" cy="270.6" r="1.05" fill="#5b6064"/>
<rect x="84.8" y="270.8" width="6.4" height="1.5" rx="0.75" fill="#5b6064"/>
<rect x="72" y="315.2" width="33" height="3.1" rx="1.55" fill="#fff"/>
<rect x="72" y="325.9" width="33" height="3.1" rx="1.55" fill="#fff"/>
<rect x="86.2" y="336.2" width="18.8" height="3.1" rx="1.55" fill="#fff"/>
<path d="M77.4 331.8 l1.65 3.6 l3.9 0.35 l-2.95 2.6 l0.9 3.85 l-3.5 -2.05 l-3.5 2.05 l0.9 -3.85 l-2.95 -2.6 l3.9 -0.35 z" fill="#fff"/>
<path d="M75.3 378 h16.3 l11.3 13 h-5 l-8.4 -10.9 h-8.8 v10.9 h-5.2 z" fill="#fff"/>
<path d="M74 393.2 h30.2 v4.6 q-10 0.6 -12.4 12.2 h-17.8 z" fill="#fff"/>
<rect x="90.2" y="395.6" width="4.6" height="1.6" fill="#5b6064"/>
<rect x="72.2" y="442.8" width="32.4" height="32.2" rx="4.5" fill="#fff"/>
<rect x="87.8" y="442.8" width="1.3" height="32.2" fill="#0e87a5"/>
<rect x="72.2" y="458.2" width="32.4" height="1.6" fill="#0e87a5" opacity="0.65"/>
<path d="M80.2 447.5 v7.5 M76.5 451.2 h7.5" stroke="#0e87a5" stroke-width="1.9" stroke-linecap="round"/>
<path d="M93 451.2 h7.5" stroke="#0e87a5" stroke-width="1.9" stroke-linecap="round"/>
<path d="M77.6 464.3 l5 5 M82.6 464.3 l-5 5" stroke="#0e87a5" stroke-width="1.9" stroke-linecap="round"/>
<path d="M93 464.8 h7.5 M93 469.5 h7.5" stroke="#0e87a5" stroke-width="1.9" stroke-linecap="round"/>
<path d="M75 515.3 h4.8 l1.6 -2.3 q0.6 -1 1.8 -1 h9.6 q1.2 0 1.8 1 l1.6 2.3 h4.8 a2 2 0 0 1 2 2 v16.3 a2 2 0 0 1 -2 2 h-26 a2 2 0 0 1 -2 -2 v-16.3 a2 2 0 0 1 2 -2z" fill="#fff"/>
<circle cx="88" cy="525.3" r="6.6" fill="none" stroke="#5b6064" stroke-width="1.3"/>
<circle cx="99.2" cy="519" r="0.9" fill="#5b6064"/>
<path d="M79.2 1034.5 h11.3 l7.2 7.4 v19 a1.8 1.8 0 0 1 -1.8 1.8 h-16.7 a1.8 1.8 0 0 1 -1.8 -1.8 v-24.6 a1.8 1.8 0 0 1 1.8 -1.8z" fill="none" stroke="#fff" stroke-width="1.9"/>
<path d="M89.9 1034.8 v7.6 h7.6" fill="none" stroke="#fff" stroke-width="1.9"/>
<path d="M88.2 1045 v10.5 M83.2 1051 l5 5 l5 -5" fill="none" stroke="#fff" stroke-width="2.3" stroke-linecap="round" stroke-linejoin="round"/>
</svg>
<div class="t" style="left:-212px;width:600px;text-align:center;top:223.99px;font-size:11px;font-weight:normal;color:#f2f2f2;-webkit-text-stroke:0.25px #f2f2f2;letter-spacing:-0.326px;">Fahrzeug</div>
<div class="t" style="left:-212px;width:600px;text-align:center;top:289.09px;font-size:11px;font-weight:normal;color:#f2f2f2;-webkit-text-stroke:0.25px #f2f2f2;letter-spacing:0.061px;">Ausstattung</div>
<div class="t" style="left:-212px;width:600px;text-align:center;top:354.29px;font-size:11px;font-weight:normal;color:#f2f2f2;-webkit-text-stroke:0.25px #f2f2f2;">Daten</div>
<div class="t" style="left:-212px;width:600px;text-align:center;top:419.49px;font-size:11px;font-weight:normal;color:#f2f2f2;-webkit-text-stroke:0.25px #f2f2f2;">Grafik</div>
<div class="t" style="left:-212px;width:600px;text-align:center;top:484.59px;font-size:11px;font-weight:normal;color:#f2f2f2;-webkit-text-stroke:0.25px #f2f2f2;letter-spacing:-0.042px;">Kalkulieren</div>
<div class="t" style="left:-212px;width:600px;text-align:center;top:549.49px;font-size:11px;font-weight:normal;color:#f2f2f2;-webkit-text-stroke:0.25px #f2f2f2;">Fotos</div>
<div class="t" style="left:-212px;width:600px;text-align:center;top:1073.09px;font-size:11px;font-weight:normal;color:#f2f2f2;-webkit-text-stroke:0.25px #f2f2f2;letter-spacing:-0.108px;">Berichte</div>
<div class="r" style="left:58px;top:840px;width:20px;height:72px;background:#e5e7e9;border-radius:0 5px 5px 0;"></div>
<div class="t" style="left:68.3px;top:875.8px;font-size:12px;color:#17738b;transform:translate(-50%,-50%) rotate(-90deg);letter-spacing:0.2px;-webkit-text-stroke:0.2px #17738b;">Feedback</div>
<svg style="left:1740px;top:1040px" width="40" height="40" viewBox="1740 1040 40 40">
<circle cx="1762.2" cy="1057.5" r="6.2" fill="#fff"/>
<path d="M1752.9 1072 a9.3 8 0 0 1 15.7 -5.7 v5.7 z" fill="#fff"/>
<rect x="1766.2" y="1064.6" width="11.2" height="12.4" rx="1.3" fill="#006680" stroke="#fff" stroke-width="1.1" opacity="1"/>
<rect x="1769.3" y="1062.9" width="5" height="2.6" rx="0.8" fill="#fff"/>
<path d="M1768.4 1068.5 h6.8 M1768.4 1071 h6.8 M1768.4 1073.5 h6.8" stroke="#fff" stroke-width="1"/>
</svg>
<svg style="left:0;top:0" width="1850" height="200"><path d="M1756 178.5 L1764.8 169.3 L1774 178.5 Z" fill="#33363a"/></svg>
<div class="r" style="left:1218px;top:178px;width:570px;height:313px;background:#33363a;border-radius:16px;"></div>
<div class="t" style="left:1243px;top:194.96px;font-size:16px;font-weight:bold;color:#8f959a;letter-spacing:0.539px;">Reparaturkosten</div>
<svg style="left:0;top:0" width="1850" height="500"><path d="M1235.5 254.5 L1240.3 259.3 L1245 254.5" fill="none" stroke="#fff" stroke-width="1.7" stroke-linecap="round" stroke-linejoin="round"/><path d="M1235.5 294.5 L1240.3 299.3 L1245 294.5" fill="none" stroke="#fff" stroke-width="1.7" stroke-linecap="round" stroke-linejoin="round"/></svg>
<div class="t" style="left:1254.7px;top:249.15px;font-size:14px;font-weight:bold;color:#fff;letter-spacing:-0.215px;">Ersatzteile</div>
<div class="t" style="right:78.5px;text-align:right;top:250.05px;font-size:14px;font-weight:bold;color:#fff;letter-spacing:0.086px;margin-right:-0.086px;">435,95 €</div>
<div class="t" style="left:1254.7px;top:289.65px;font-size:14px;font-weight:bold;color:#fff;letter-spacing:-0.109px;">Arbeitsaufwand</div>
<div class="t" style="right:254.4000000000001px;text-align:right;top:276.04px;font-size:12px;font-weight:normal;color:#9ba0a4;letter-spacing:0.364px;margin-right:-0.364px;">Stunden</div>
<div class="t" style="right:254.4000000000001px;text-align:right;top:291.84px;font-size:12px;font-weight:normal;color:#9ba0a4;letter-spacing:0.2px;">4,40</div>
<div class="t" style="right:78.5px;text-align:right;top:289.75px;font-size:14px;font-weight:bold;color:#fff;">528,00 €</div>
<div class="t" style="left:1253.7px;top:337.65px;font-size:14px;font-weight:normal;color:#d5d9dc;letter-spacing:0.393px;">Reparaturkosten netto</div>
<div class="t" style="right:78.5px;text-align:right;top:338.35px;font-size:14px;font-weight:bold;color:#fff;">963,95 €</div>
<div class="t" style="left:1253.5px;top:385.35px;font-size:14px;font-weight:normal;color:#d5d9dc;">MwSt</div>
<div class="t" style="right:267px;text-align:right;top:370.84px;font-size:12px;font-weight:normal;color:#9ba0a4;letter-spacing:0.163px;margin-right:-0.163px;">Prozentsatz</div>
<div class="t" style="right:267px;text-align:right;top:387.34px;font-size:12px;font-weight:normal;color:#9ba0a4;letter-spacing:0.2px;">19,00 %</div>
<div class="t" style="right:78.5px;text-align:right;top:385.65px;font-size:14px;font-weight:bold;color:#fff;">183,15 €</div>
<div class="r" style="left:1258px;top:409.5px;width:506px;height:1.3px;background:#d8dcdf;"></div>
<div class="t" style="left:1253.7px;top:450.15px;font-size:14px;font-weight:normal;color:#d5d9dc;letter-spacing:0.278px;">Gesamtsumme</div>
<div class="t" style="right:341px;text-align:right;top:435.54px;font-size:12px;font-weight:normal;color:#9ba0a4;letter-spacing:0.364px;margin-right:-0.364px;">Wiederbeschaffungswert</div>
<div class="t" style="right:341px;text-align:right;top:452.74px;font-size:12px;font-weight:normal;color:#9ba0a4;letter-spacing:0.2px;">22.500,00 €</div>
<div class="t" style="right:243.29999999999995px;text-align:right;top:435.54px;font-size:12px;font-weight:normal;color:#9ba0a4;letter-spacing:0.163px;margin-right:-0.163px;">Prozentsatz</div>
<div class="t" style="right:243.29999999999995px;text-align:right;top:452.74px;font-size:12px;font-weight:normal;color:#9ba0a4;letter-spacing:0.2px;">5,10 %</div>
<div class="t" style="right:78.5px;text-align:right;top:450.65px;font-size:14px;font-weight:bold;color:#fff;letter-spacing:-0.130px;margin-right:0.130px;">1.147,10 €</div>
</div></div>
<div style="position:absolute;left:56px;top:38px;width:1738px;height:1054px;border-radius:25px 25px 28px 28px;box-shadow:inset 0 0 0 1px rgba(255,255,255,0.25);pointer-events:none;"></div>
</body></html>
